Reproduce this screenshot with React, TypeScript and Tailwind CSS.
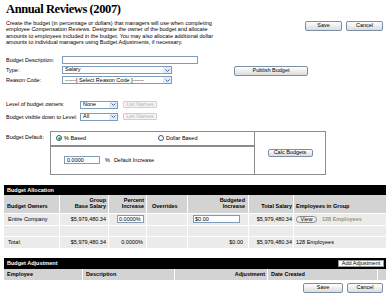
import React from "react";

const Btn = ({ children, className }: { children: React.ReactNode; className: string }) => (
  <button className={`flex items-center justify-center rounded-[2px] border border-[#7a8ea8] bg-linear-to-b from-white to-[#dcdcdc] leading-none text-black ${className}`}>
    {children}
  </button>
);

const DisabledBtn = ({ children }: { children: React.ReactNode }) => (
  <button className="ml-[5px] flex h-[7px] w-[34px] items-center justify-center rounded-[1px] border border-[#cfcfcf] bg-[#f5f5f5] leading-none text-[#b5b5b5]">
    {children}
  </button>
);

const Select = ({ text, className }: { text: string; className: string }) => (
  <div className={`flex h-[8px] items-center border border-[#7f9db9] bg-white ${className}`}>
    <span className="flex-1 truncate pl-[2px] leading-none">{text}</span>
    <span className="flex h-full w-[8px] items-center justify-center bg-[#e3ebfb]">
      <svg width="5" height="3" viewBox="0 0 5 3">
        <path d="M0.5 0.5 L2.5 2.5 L4.5 0.5" fill="none" stroke="#4a64a0" strokeWidth="1" />
      </svg>
    </span>
  </div>
);

const Radio = ({ on }: { on?: boolean }) => (
  <span className="flex h-[6px] w-[6px] items-center justify-center rounded-full border border-[#2f5a8a] bg-white">
    {on && <span className="h-[3px] w-[3px] rounded-full bg-[#3fae3f]" />}
  </span>
);

const App = () => {
  return (
    <div className="h-[305px] w-[388px] overflow-hidden bg-white font-['Liberation_Sans',Arial,sans-serif] text-[5.5px] text-black">
      {/* header */}
      <div className="flex items-start justify-between">
        <div className="pl-[6px] pt-[2px]">
          <h1 className="font-['Liberation_Serif','Times_New_Roman',serif] text-[12.5px] font-bold leading-[14px] tracking-[-0.4px]">
            Annual Reviews (2007)
          </h1>
          <p className="mt-[4px] whitespace-nowrap leading-[6.4px]">
            Create the budget (in percentage or dollars) that managers will use when completing
            <br />
            employee Compensation Reviews. Designate the owner of the budget and allocate
            <br />
            amounts to employees included in the budget. You may also allocate additional dollar
            <br />
            amounts to individual managers using Budget Adjustments, if necessary.
          </p>
        </div>
        <div className="flex gap-[4px] pr-[5px] pt-[21px]">
          <Btn className="h-[10px] w-[37px]">Save</Btn>
          <Btn className="h-[10px] w-[37px]">Cancel</Btn>
        </div>
      </div>

      {/* budget fields */}
      <div className="mt-[10px] flex pl-[6px]">
        <div className="flex w-[192px] flex-col gap-[2px]">
          <div className="flex items-center">
            <span className="w-[56px]">Budget Description:</span>
            <input readOnly value="" className="h-[8px] w-[136px] border border-[#7f9db9] bg-white" />
          </div>
          <div className="flex items-center">
            <span className="w-[56px]">Type:</span>
            <Select text="Salary" className="w-[110px]" />
          </div>
          <div className="flex items-center">
            <span className="w-[56px]">Reason Code:</span>
            <Select text="------[ Select Reason Code ]------" className="w-[110px]" />
          </div>
        </div>
        <Btn className="ml-[36px] mt-[10px] h-[10px] w-[74px]">Publish Budget</Btn>
      </div>

      <div className="mt-[16px] flex flex-col gap-[4px] pl-[6px]">
        <div className="flex items-center">
          <span className="w-[74px]">Level of budget owners:</span>
          <Select text="None" className="w-[38px]" />
          <DisabledBtn>List Names</DisabledBtn>
        </div>
        <div className="flex items-center">
          <span className="w-[74px]">Budget visible down to Level:</span>
          <Select text="All" className="w-[38px]" />
          <DisabledBtn>List Names</DisabledBtn>
        </div>
      </div>

      {/* budget default */}
      <div className="mt-[10px] flex pl-[6px]">
        <span className="w-[44px] pt-[2px]">Budget Default:</span>
        <div className="flex h-[44px] w-[276px] border border-[#8c8c8c]">
          <div className="flex w-[204px] flex-col border-r border-[#8c8c8c]">
            <div className="flex h-[15px] items-center border-b-2 border-[#8c8c8c] pl-[5px]">
              <Radio on />
              <span className="ml-[2px] w-[94px]">% Based</span>
              <Radio />
              <span className="ml-[2px]">Dollar Based</span>
            </div>
            <div className="flex flex-1 items-center pl-[13px]">
              <input readOnly value="0.0000" className="h-[8px] w-[36px] border border-[#7f9db9] px-[2px]" />
              <span className="ml-[5px]">%</span>
              <span className="ml-[4px]">Default Increase</span>
            </div>
          </div>
          <div className="flex flex-1 items-center justify-center">
            <Btn className="h-[8px] w-[45px]">Calc Budgets</Btn>
          </div>
        </div>
      </div>

      {/* budget allocation */}
      <div className="mr-[2px] ml-[4px] mt-[10px]">
        <div className="flex h-[10px] items-center bg-black pl-[3px] font-bold text-white">Budget Allocation</div>
        <div className="grid grid-cols-[55px_48px_37px_40px_60px_44px_1fr] gap-px bg-white font-bold">
          <div className="flex h-[18px] items-end bg-[#d3d3d3] pb-[3px] pl-[3px]">Budget Owners</div>
          <div className="flex flex-col items-end justify-end bg-[#d3d3d3] pb-[3px] pr-[2px] leading-[6.5px]">
            <span>Group</span>
            <span>Base Salary</span>
          </div>
          <div className="flex flex-col items-end justify-end bg-[#d3d3d3] pb-[3px] pr-[2px] leading-[6.5px]">
            <span>Percent</span>
            <span>Increase</span>
          </div>
          <div className="flex items-end bg-[#d3d3d3] pb-[3px] pl-[5px]">Overrides</div>
          <div className="flex flex-col items-end justify-end bg-[#d3d3d3] pb-[3px] pr-[3px] leading-[6.5px]">
            <span>Budgeted</span>
            <span>Increase</span>
          </div>
          <div className="flex items-end justify-end bg-[#d3d3d3] pb-[3px] pr-[1px]">Total Salary</div>
          <div className="flex items-end bg-[#d3d3d3] pb-[3px] pl-[2px]">Employees in Group</div>
        </div>
        <div className="mt-px grid grid-cols-[55px_48px_37px_40px_60px_44px_1fr] gap-px bg-white">
          <div className="flex h-[11px] items-center bg-[#ebebeb] pl-[4px]">Entire Company</div>
          <div className="flex items-center justify-end bg-[#ebebeb] pr-[2px]">$5,979,480.34</div>
          <div className="flex items-center justify-end bg-[#ebebeb] pr-[2px]">
            <input readOnly value="0.0000%" className="h-[8px] w-[27px] border border-[#7f9db9] bg-white px-[1px]" />
          </div>
          <div className="bg-[#ebebeb]" />
          <div className="flex items-center bg-[#ebebeb] pl-[5px]">
            <input readOnly value="$0.00" className="h-[8px] w-[47px] border border-[#7f9db9] bg-white px-[1px]" />
          </div>
          <div className="flex items-center justify-end bg-[#ebebeb] pr-[1px]">$5,979,480.34</div>
          <div className="flex items-center bg-[#ebebeb] pl-[2px]">
            <button className="flex h-[7px] w-[21px] items-center justify-center rounded-full border border-[#8a8a8a] bg-linear-to-b from-white to-[#e0e0e0] leading-none">
              View
            </button>
            <span className="ml-[5px] font-bold text-[#9c927c]">128 Employees</span>
          </div>

          <div className="h-[10px] bg-[#ebebeb]" />
          <div className="bg-[#ebebeb]" />
          <div className="bg-[#ebebeb]" />
          <div className="bg-[#ebebeb]" />
          <div className="bg-[#ebebeb]" />
          <div className="bg-[#ebebeb]" />
          <div className="bg-[#ebebeb]" />

          <div className="flex h-[11px] items-center bg-[#ebebeb] pl-[4px]">Total:</div>
          <div className="flex items-center justify-end bg-[#ebebeb] pr-[2px]">$5,979,480.34</div>
          <div className="flex items-center justify-end bg-[#ebebeb] pr-[3px]">0.0000%</div>
          <div className="bg-[#ebebeb]" />
          <div className="flex items-center justify-end bg-[#ebebeb] pr-[5px]">$0.00</div>
          <div className="flex items-center justify-end bg-[#ebebeb] pr-[1px]">$5,979,480.34</div>
          <div className="flex items-center bg-[#ebebeb] pl-[2px]">128 Employees</div>
        </div>
      </div>

      {/* budget adjustment */}
      <div className="mr-[2px] ml-[4px] mt-[10px]">
        <div className="flex h-[11px] items-center justify-between bg-black pl-[3px] pr-[2px]">
          <span className="font-bold text-white">Budget Adjustment</span>
          <button className="flex h-[7px] w-[46px] items-center justify-center border border-[#9a9a9a] bg-white leading-none">
            Add Adjustment
          </button>
        </div>
        <div className="grid grid-cols-[78px_91px_92px_109px_1fr] gap-px bg-white font-bold">
          <div className="flex h-[11px] items-center bg-[#d3d3d3] pl-[3px]">Employee</div>
          <div className="flex items-center bg-[#d3d3d3] pl-[3px]">Description</div>
          <div className="flex items-center justify-end bg-[#d3d3d3] pr-[2px]">Adjustment</div>
          <div className="flex items-center bg-[#d3d3d3] pl-[3px]">Date Created</div>
          <div className="bg-[#d3d3d3]" />
        </div>
      </div>

      <div className="mt-[3px] flex justify-end gap-[4px] pr-[5px]">
        <Btn className="h-[10px] w-[40px]">Save</Btn>
        <Btn className="h-[10px] w-[36px]">Cancel</Btn>
      </div>
    </div>
  );
};

export default App;
